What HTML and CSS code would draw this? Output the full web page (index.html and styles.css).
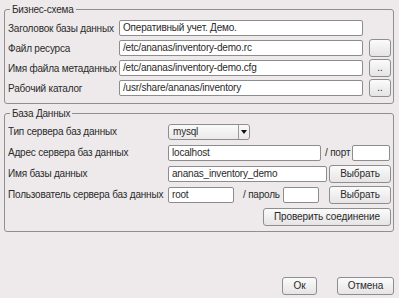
FILE: index.html
```html
<!DOCTYPE html>
<html lang="ru">
<head>
    <meta charset="UTF-8">
    <title>Настройка базы данных</title>
    <link rel="stylesheet" href="styles.css">
</head>
<body>
    <div class="dialog">
        <fieldset class="group group-scheme">
            <legend>Бизнес-схема</legend>
            <div class="scheme-grid">
                <label>Заголовок базы данных</label>
                <div class="field">Оперативный учет. Демо.</div>
                <span></span>

                <label>Файл ресурса</label>
                <div class="field">/etc/ananas/inventory-demo.rc</div>
                <button class="btn btn-small"></button>

                <label>Имя файла метаданных</label>
                <div class="field">/etc/ananas/inventory-demo.cfg</div>
                <button class="btn btn-small">..</button>

                <label>Рабочий каталог</label>
                <div class="field">/usr/share/ananas/inventory</div>
                <button class="btn btn-small">..</button>
            </div>
        </fieldset>

        <fieldset class="group group-db">
            <legend>База Данных</legend>
            <div class="db-row">
                <label>Тип сервера баз данных</label>
                <div class="combo">
                    <span class="combo-text">mysql</span>
                    <span class="combo-arrow"></span>
                </div>
            </div>
            <div class="db-row">
                <label>Адрес сервера баз данных</label>
                <div class="field field-host">localhost</div>
                <span class="sep sep-port">/ порт</span>
                <div class="field field-port"></div>
            </div>
            <div class="db-row">
                <label>Имя базы данных</label>
                <div class="field field-name">ananas_inventory_demo</div>
                <button class="btn btn-pick">Выбрать</button>
            </div>
            <div class="db-row">
                <label>Пользователь сервера баз данных</label>
                <div class="field field-user">root</div>
                <span class="sep sep-pass">/ пароль</span>
                <div class="field field-pass"></div>
                <button class="btn btn-pick">Выбрать</button>
            </div>
            <div class="db-row db-check">
                <button class="btn btn-check">Проверить соединение</button>
            </div>
        </fieldset>

        <div class="actions">
            <button class="btn btn-ok">Ок</button>
            <button class="btn btn-cancel">Отмена</button>
        </div>
    </div>
</body>
</html>
```

FILE: styles.css
```css
html, body {
    margin: 0;
    padding: 0;
}

body {
    background-color: #eeeaec;
    color: #2a2a2a;
    font-family: "Liberation Sans", Arial, sans-serif;
    font-size: 10px;
    line-height: 13px;
    letter-spacing: -0.2px;
    width: 399px;
    height: 298px;
    overflow: hidden;
}

.dialog {
    padding: 3px 5px 0 4px;
}

/* рамки групп */
.group {
    margin: 0;
    border: 1px solid #8f8f8f;
    border-radius: 3px;
    min-width: 0;
}

.group legend {
    padding: 0 2px;
    margin-left: 2px;
}

.group-scheme {
    padding: 2px 2px 5px 3px;
}

.scheme-grid {
    display: grid;
    grid-template-columns: 111px 244px 1fr;
    grid-auto-rows: 20px;
    align-items: center;
}

.scheme-grid label {
    white-space: nowrap;
}

/* поля ввода */
.field {
    height: 14px;
    line-height: 14px;
    background: #ffffff;
    border: 1px solid #8d8d8d;
    border-radius: 2px;
    padding: 0 3px;
    white-space: nowrap;
    overflow: hidden;
    box-sizing: content-box;
}

/* кнопки */
.btn {
    font-family: inherit;
    font-size: 10px;
    letter-spacing: -0.1px;
    color: #2a2a2a;
    background: linear-gradient(to bottom, #fbfbfb, #e6e4e5);
    border: 1px solid #8e8e8e;
    border-radius: 3px;
    padding: 0;
    height: 18px;
    line-height: 14px;
}

.btn-small {
    width: 22px;
    margin-left: 6px;
}

.group-db {
    margin-top: 3px;
    padding: 1px 2px 3px 3px;
}

.db-row {
    display: flex;
    align-items: center;
    height: 21px;
}

.db-row label {
    width: 160px;
    flex: none;
    white-space: nowrap;
}

.combo {
    width: 80px;
    height: 14px;
    display: flex;
    border: 1px solid #8e8e8e;
    border-radius: 3px;
    background: linear-gradient(to bottom, #fafafa, #ebe9ea);
}

.combo-text {
    flex: 1;
    padding-left: 4px;
    line-height: 14px;
}

.combo-arrow {
    width: 10px;
    border-left: 1px solid #9a9a9a;
    position: relative;
}

.combo-arrow::after {
    content: '';
    position: absolute;
    left: 2px;
    top: 5px;
    border-left: 3px solid transparent;
    border-right: 3px solid transparent;
    border-top: 4px solid #111111;
}

.field-host { width: 145px; }
.field-port { width: 30px; }
.field-name { width: 151px; }
.field-user { width: 58px; }
.field-pass { width: 28px; }

.sep {
    white-space: nowrap;
}

.sep-port {
    margin: 0 2px 0 4px;
}

.sep-pass {
    margin: 0 3px 0 9px;
}

.btn-pick {
    width: 62px;
    margin-left: auto;
}

.db-check {
    justify-content: flex-end;
    height: 23px;
}

.btn-check {
    width: 128px;
}

.actions {
    display: flex;
    justify-content: flex-end;
    gap: 20px;
    margin-top: 45px;
}

.btn-ok {
    width: 35px;
}

.btn-cancel {
    width: 57px;
}
```
